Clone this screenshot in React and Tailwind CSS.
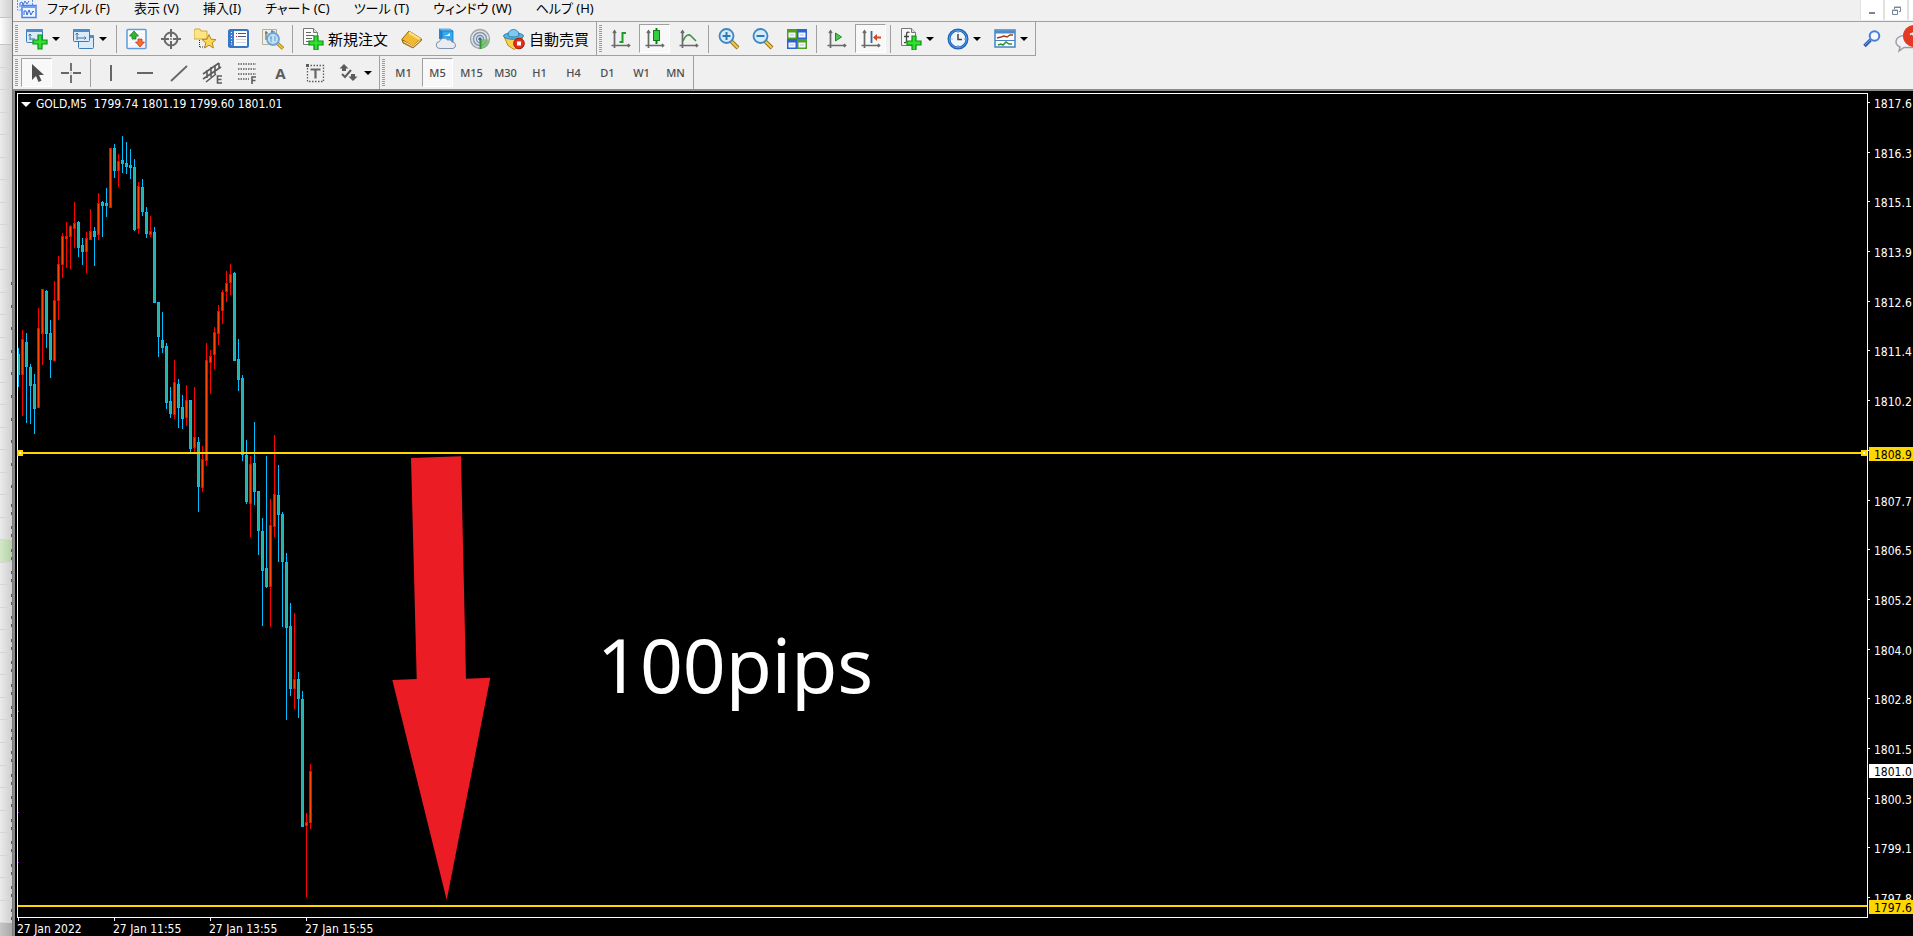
import React from "react";

/* ---------- data ---------- */

const MENUS = ["ファイル (F)", "表示 (V)", "挿入(I)", "チャート (C)", "ツール (T)", "ウィンドウ (W)", "ヘルプ (H)"];
const PERIODS = ["M1", "M5", "M15", "M30", "H1", "H4", "D1", "W1", "MN"];
const PRICES = [
  "1817.6", "1816.3", "1815.1", "1813.9", "1812.6", "1811.4", "1810.2", "1808.9", "1807.7",
  "1806.5", "1805.2", "1804.0", "1802.8", "1801.5", "1800.3", "1799.1", "1797.8",
];
const TIMES = ["27 Jan 2022", "27 Jan 11:55", "27 Jan 13:55", "27 Jan 15:55"];

// [rising, wick top, wick bottom, body top, body bottom], one bar every 4px
const CANDLES = [
  [0, 348, 387, 354, 375], [1, 330, 416, 339, 375], [0, 333, 423, 342, 367], [0, 364, 424, 367, 386],
  [0, 374, 434, 384, 409], [1, 308, 408, 328, 408], [1, 289, 365, 289, 334], [0, 290, 348, 291, 334],
  [0, 320, 378, 333, 360], [1, 281, 362, 300, 361], [1, 256, 320, 264, 301], [1, 233, 278, 236, 265],
  [1, 222, 268, 236, 239], [1, 225, 269, 226, 237], [1, 202, 248, 223, 229], [0, 221, 257, 222, 248],
  [0, 238, 265, 245, 252], [1, 232, 273, 238, 252], [1, 209, 240, 231, 240], [0, 227, 266, 231, 237],
  [1, 193, 240, 203, 235], [0, 201, 237, 202, 206], [0, 188, 217, 203, 206], [1, 148, 208, 148, 208],
  [0, 144, 178, 148, 171], [1, 154, 187, 161, 171], [0, 136, 173, 160, 164], [0, 142, 174, 163, 167],
  [0, 149, 179, 165, 168], [0, 159, 231, 167, 230], [1, 182, 234, 186, 229], [0, 179, 216, 187, 212],
  [0, 207, 238, 212, 234], [1, 216, 237, 231, 235], [0, 227, 303, 232, 303], [0, 302, 357, 302, 337],
  [0, 312, 353, 340, 348], [0, 343, 409, 346, 403], [0, 387, 418, 401, 414], [1, 360, 419, 382, 415],
  [0, 379, 428, 384, 408], [0, 395, 429, 407, 419], [1, 385, 426, 400, 418], [0, 400, 453, 400, 449],
  [1, 387, 453, 437, 448], [0, 437, 512, 442, 487], [1, 446, 492, 459, 488], [1, 343, 466, 360, 461],
  [1, 350, 394, 356, 363], [1, 327, 369, 332, 355], [1, 305, 345, 311, 334], [1, 290, 324, 292, 311],
  [1, 271, 302, 283, 292], [1, 264, 295, 274, 283], [0, 272, 361, 273, 361], [0, 339, 391, 359, 380],
  [0, 375, 461, 378, 455], [0, 440, 504, 455, 502], [1, 456, 537, 464, 504], [0, 422, 505, 463, 492],
  [0, 491, 555, 491, 531], [0, 518, 626, 531, 571], [0, 456, 588, 568, 587], [1, 499, 627, 525, 587],
  [1, 435, 537, 494, 527], [0, 465, 562, 495, 515], [0, 512, 627, 514, 562], [0, 553, 720, 562, 628],
  [0, 603, 696, 626, 689], [1, 613, 709, 679, 689], [0, 672, 718, 679, 699], [0, 691, 827, 699, 827],
  [1, 813, 897, 822, 826], [1, 764, 829, 771, 823],
];

/* ---------- icons ---------- */

function Ico({ children, w = 22, h = 22 }) {
  return (
    <svg width={w} height={h} viewBox={`0 0 ${w} ${h}`} fill="none" aria-hidden="true" className="shrink-0">
      {children}
    </svg>
  );
}

function Plus({ x, y }) {
  return (
    <path
      d={`M${x + 5} ${y}h4v5h5v4h-5v5h-4v-5h-5v-4h5z`}
      fill="#2fe02f"
      stroke="#0b8f16"
      strokeWidth="1.2"
    />
  );
}

function Win({ x, y, w, h }) {
  return (
    <g>
      <rect x={x + 0.5} y={y + 0.5} width={w} height={h} rx="1" fill="#d9eaf8" stroke="#3c7cb8" />
      <rect x={x} y={y} width={w + 1} height="3" rx="1" fill="#4a8ccc" />
    </g>
  );
}

const Logo = () => (
  <svg width="20" height="19" viewBox="0 0 20 19" fill="none" aria-hidden="true">
    <rect x=".5" y="-3" width="15" height="13" fill="#e8f1ff" stroke="#5c8fe8" strokeDasharray="2 1" />
    <path d="M3 7V3l2-1 1 3 2-4 2 3 2-3" stroke="#3f74dc" />
    <rect x="5" y="5.500" width="14" height="12" fill="#eef5ff" stroke="#4a82ea" strokeWidth="1.500" />
    <path d="M5 7h14" stroke="#6fa0f2" strokeWidth="2" />
    <path d="M7 15v-4l2 0 1 4 2-5 2 5 2-4 1 1" stroke="#3568d4" />
  </svg>
);

const NewChart = () => (
  <Ico>
    <Win x={0} y={1} w={16} h={13} />
    <path d="M4 6v6M2.500 7.500 4 6l1.500 1.500M4 11h5" stroke="#3d6f9f" />
    <Plus x={7} y={7} />
  </Ico>
);
const Profiles = () => (
  <Ico>
    <Win x={5} y={7} w={15} h={13} />
    <Win x={0} y={1} w={16} h={12} />
    <path d="M4 5v7M2.500 6.500 4 5l1.500 1.500M4 10h9M11.500 8.500 13 10l-1.500 1.500" stroke="#3d6f9f" />
  </Ico>
);
const Market = () => (
  <Ico>
    <rect x="1" y="1.500" width="19" height="19" rx="1" fill="#fff" stroke="#5b9bdc" strokeWidth="1.500" />
    <path d="M3 6h16M3 9h16M3 12h16M3 15h16M3 18h16" stroke="#e3eaf1" />
    <path d="M8 3l4.500 5h-2.500v3H6V8H3.500z" fill="#36b336" stroke="#168016" strokeWidth=".8" />
    <path d="M14 19l-4.500-5H12v-3h4v3h2.500z" fill="#f46a3a" stroke="#c93c12" strokeWidth=".8" />
  </Ico>
);
const Target = () => (
  <Ico>
    <circle cx="11" cy="11" r="6.500" stroke="#6a6a6a" strokeWidth="2" />
    <path d="M11 1v8M11 13v8M1 11h8M13 11h8" stroke="#6a6a6a" strokeWidth="2" />
    <path d="M11 10v2M10 11h2" stroke="#777" />
  </Ico>
);
const Favorites = () => (
  <Ico>
    <path d="M0 3l1-2h5l1 2h6v8H0z" fill="#fbe588" stroke="#d2a838" />
    <path d="M5.500 12v7M6 19h5" stroke="#333" strokeDasharray="1 1" />
    <path d="M15 6.500l2 4.700 5 .4-3.800 3.300 1.200 5.100-4.400-2.800-4.400 2.800 1.200-5.100L8 11.600l5-.4z" fill="#fbd657" stroke="#b98718" />
  </Ico>
);
const Navigator = () => (
  <Ico>
    <rect x="1" y="2" width="19" height="17" rx="1.500" fill="#fff" stroke="#3876c4" strokeWidth="2" />
    <path d="M2 3h4v15H2z" fill="#3b7fd0" />
    <path d="M3 4.500h1M3 7.500h1M3 10.500h1M3 13.500h1M3 16h1" stroke="#fff" />
    <path d="M8 5.500h1M8 8.500h1" stroke="#d22" />
    <path d="M10 5.500h8M10 8.500h8" stroke="#557" />
    <path d="M8 11.500h10M8 14.500h10" stroke="#ccd8e6" />
  </Ico>
);
const Tester = () => (
  <Ico>
    <path d="M.5 1.500h14v15H.5z" fill="#efefe6" stroke="#b0b09c" />
    <path d="M4 3v9M3 5h3M10 2v5M9 4h4M4 10h2" stroke="#555" />
    <path d="M15 15l6 5.500" stroke="#9a7414" strokeWidth="3.500" />
    <path d="M15 15l6 5.500" stroke="#f0c23c" strokeWidth="2" />
    <circle cx="11" cy="11" r="6" fill="#bfe0f6" stroke="#6ba6d6" strokeWidth="1.800" />
    <path d="M9 8v6M13 8v5M8 10h2" stroke="#6f9dc0" />
  </Ico>
);
const NewOrder = () => (
  <Ico>
    <path d="M1.500 .5h10l4 4v12h-14z" fill="#fbfbfb" stroke="#777" />
    <path d="M11.500 .5v4h4" stroke="#777" fill="#ddd" />
    <path d="M4 4.500h5M4 7.500h8M4 10.500h6M4 13.500h4" stroke="#666" />
    <Plus x={7} y={8} />
  </Ico>
);
const Book = () => (
  <Ico>
    <path d="M8 3l12 7.500-8 8L.8 11.500z" fill="#f1b92e" stroke="#96640c" />
    <path d="M8 3l12 7.500-2 1.500L8 6z" fill="#fbe08a" />
    <path d="M1 12l1 3 10 5 8.500-7.500V11L12 18.500z" fill="#c98a16" stroke="#8a5a0a" strokeWidth=".8" />
    <path d="M2.500 13.500l9.500 5 7.500-6.500" stroke="#fff3c8" />
  </Ico>
);
const Cloud = () => (
  <Ico>
    <path d="M4 1l3 1v10l-3-1z" fill="#1c86d8" />
    <path d="M4 1h11l3 2H7z" fill="#7fd0fb" stroke="#1c7fc8" strokeWidth=".6" />
    <path d="M7 3h11v11H7z" fill="#35a8ee" stroke="#1776bd" strokeWidth=".8" />
    <path d="M9 8l3-1 3-2v3z" fill="#e8f7ff" />
    <path d="M5 20.500a3.500 3.500 0 01-.5-7 4.500 4.500 0 018-1.500 3.500 3.500 0 014.500 2 3.300 3.300 0 011 6.500z" fill="#e8ecf3" stroke="#8391ab" />
  </Ico>
);
const Signal = () => (
  <Ico>
    <circle cx="11" cy="11" r="9.500" fill="#dde3ea" stroke="#9aa4ae" strokeWidth="1.300" />
    <circle cx="11" cy="11" r="6.500" stroke="#8a97a6" strokeWidth="1.500" />
    <circle cx="11" cy="11" r="3.500" stroke="#6f88a8" strokeWidth="1.300" fill="#eef3f8" />
    <path d="M11 11l9 .5a9.500 9.500 0 01-9 9.500z" fill="#6cbb62" opacity=".75" />
    <circle cx="11" cy="11" r="1.800" fill="#3d69a8" />
    <path d="M11.500 12v9" stroke="#2f9a34" strokeWidth="2" />
  </Ico>
);
const AutoTrade = () => (
  <Ico>
    <path d="M1.500 9.500h18l-2 7.500-6.500 4.500L5 17.500z" fill="#f7d24c" stroke="#b98b1c" />
    <ellipse cx="10.500" cy="8" rx="10" ry="3.300" fill="#5ab4e2" stroke="#2b7fae" />
    <path d="M5 7.500c0-8 11-8 11 0-2 2-9 2-11 0z" fill="#7ccaf0" stroke="#2b7fae" />
    <circle cx="16" cy="15.500" r="5.300" fill="#e0301e" stroke="#a81408" />
    <rect x="14" y="13.500" width="4" height="4" fill="#fff" />
  </Ico>
);

const Axes = () => (
  <path d="M4.500 3v17M1.500 17.500h18M3 5l1.500-2L6 5M18 16l1.500 1.500L18 19" stroke="#6a6a6a" strokeWidth="1.700" />
);
const BarChart = () => (
  <Ico>
    <Axes />
    <path d="M12.500 4v11M12.500 5h3.500M9.500 14h3" stroke="#1f9a2c" strokeWidth="2" />
  </Ico>
);
const CandleChart = () => (
  <Ico>
    <Axes />
    <path d="M12.500 0v16" stroke="#0c7d18" strokeWidth="2" />
    <rect x="9.500" y="2.500" width="6" height="10" fill="#33cc3e" stroke="#0c7d18" />
  </Ico>
);
const LineChart = () => (
  <Ico>
    <Axes />
    <path d="M5 13c3-7 6-7 8-5l5 5" stroke="#3f8f45" strokeWidth="1.600" />
  </Ico>
);
function Zoom({ plus }) {
  return (
    <Ico>
      <path d="M13 13l7 7" stroke="#94700f" strokeWidth="4" />
      <path d="M13 13l6.700 6.700" stroke="#f2cb4a" strokeWidth="2.200" />
      <circle cx="8.500" cy="8" r="7" fill="#d4ecfb" stroke="#3f87c2" strokeWidth="1.800" />
      <path d={plus ? "M4.500 8h8M8.500 4v8" : "M4.500 8h8"} stroke="#3279b4" strokeWidth="2" />
    </Ico>
  );
}
const Tile = () => (
  <Ico>
    <rect x="1" y="1" width="10" height="10" fill="#4f9f1c" />
    <rect x="11" y="1" width="10" height="10" fill="#2c62d2" />
    <rect x="1" y="11" width="10" height="10" fill="#2c62d2" />
    <rect x="11" y="11" width="10" height="10" fill="#4f9f1c" />
    <path d="M2.500 4.500h7v5h-7zM12.500 4.500h7v5h-7zM2.500 14.500h7v5h-7zM12.500 14.500h7v5h-7z" fill="#f4f8ff" />
    <path d="M4 7h4M14 7h4M4 17h4M14 17h4" stroke="#a9c3e4" />
  </Ico>
);
const AutoScroll = () => (
  <Ico>
    <Axes />
    <path d="M9.500 5v8l6-4z" fill="#4fc653" stroke="#168a22" />
  </Ico>
);
const Shift = () => (
  <Ico>
    <Axes />
    <path d="M11.500 3v12" stroke="#2a6c9c" strokeWidth="1.800" />
    <path d="M13 9.500l4-3.500v2.500h4v2h-4V13z" fill="#d9481c" />
  </Ico>
);
const Indicators = () => (
  <Ico>
    <path d="M1.500 .5h10l4 4v13h-14z" fill="#f8f8f8" stroke="#777" />
    <path d="M11.500 .5v4h4" stroke="#777" fill="#ddd" />
    <path d="M9.500 4.500c-2-1-3 0-3 2v6c0 2-1 2.500-2.500 2M4 8.500h5" stroke="#444" strokeWidth="1.300" />
    <Plus x={7} y={8} />
  </Ico>
);
const Clock = () => (
  <Ico>
    <circle cx="11" cy="11" r="9" fill="#eef5fb" stroke="#1e62b8" strokeWidth="3" />
    <circle cx="11" cy="11" r="8.800" stroke="#4f9be6" strokeWidth="1" />
    <path d="M11 6v5.500h4" stroke="#444" strokeWidth="1.500" />
    <path d="M11 4v1M11 17v1M4.500 11h1M17 11h1" stroke="#888" />
  </Ico>
);
const Template = () => (
  <Ico>
    <rect x="1" y="2" width="20" height="17" fill="#fff" stroke="#4384c4" strokeWidth="1.500" />
    <path d="M1 4h20" stroke="#4a8ccc" strokeWidth="3" />
    <path d="M1 12.500h20" stroke="#4384c4" />
    <path d="M3 10l4-1 3-1 3 1 3-2h3" stroke="#a83a20" strokeWidth="1.500" />
    <path d="M4 17l3-1 2 1 3-3 3 2 3 0" stroke="#2f8f34" strokeWidth="1.500" />
  </Ico>
);

const Cursor = () => (
  <Ico>
    <path d="M6 2v16l4-4 2.500 6 3-1.300L13 13h5z" fill="#4f4f4f" />
  </Ico>
);
const Cross = () => (
  <Ico>
    <path d="M11 1v8M11 13v8M1 11h8M13 11h8" stroke="#666" strokeWidth="1.800" />
    <path d="M10.500 11h1" stroke="#666" />
  </Ico>
);
const VLine = () => (
  <Ico>
    <path d="M11 3v16" stroke="#666" strokeWidth="2" />
  </Ico>
);
const HLine = () => (
  <Ico>
    <path d="M3 11h16" stroke="#666" strokeWidth="2" />
  </Ico>
);
const Trend = () => (
  <Ico>
    <path d="M3 19L19 4" stroke="#666" strokeWidth="1.800" />
  </Ico>
);
const Channel = () => (
  <Ico>
    <path d="M1 12L17 1M1 17L19 5M4 20L14 12M5 8v8M9 5v10M13 3v9M17 1v6" stroke="#5c5c5c" strokeWidth="1.600" />
    <path d="M20 14h-4.500v7H20M15.500 17.500h4" stroke="#5c5c5c" strokeWidth="1.600" />
  </Ico>
);
const Fibo = () => (
  <Ico>
    <path d="M2 2h18M2 7h18M2 12h18M2 17h11" stroke="#5c5c5c" strokeWidth="1.300" strokeDasharray="1.500 1" />
    <path d="M20 15h-4v7M16 18.500h3.500" stroke="#5c5c5c" strokeWidth="1.600" />
  </Ico>
);
const Label = () => (
  <Ico>
    <path d="M3.500 3.500h16v16h-16z" stroke="#5c5c5c" strokeDasharray="1.500 1.500" strokeWidth="1.300" />
    <path d="M2 2h3v3H2z" fill="#5c5c5c" />
    <path d="M6.500 7.500h10M11.500 7v9.500" stroke="#666" strokeWidth="2.200" />
  </Ico>
);
const Arrows = () => (
  <Ico>
    <path d="M6 2l4.500 4.500H8V9H4V6.500H1.500z" fill="#5c5c5c" />
    <path d="M4 12l3 3 6-7" stroke="#5c5c5c" strokeWidth="2" />
    <path d="M15 19l-4.500-4.500H13V12h4v2.500h2.500z" fill="#5c5c5c" />
  </Ico>
);

/* ---------- toolbar parts ---------- */

const Grip = () => (
  <span className="ml-0.5 h-[27px] w-[3px] shrink-0 bg-[repeating-linear-gradient(to_bottom,#9a9a9a_0,#9a9a9a_1px,#f0f0f0_1px,#f0f0f0_2px)]" />
);

const Sep = () => <span className="mx-px h-7 w-px shrink-0 bg-[#a0a0a0]" />;

function Tool({ name, icon, text, menu, active }) {
  return (
    <button
      type="button"
      aria-label={name}
      aria-pressed={active ? true : undefined}
      className={
        "flex h-[29px] shrink-0 items-center " +
        (active
          ? "border border-t-[#a0a0a0] border-r-white border-b-white border-l-[#a0a0a0] bg-[#f8f8f8] "
          : "") +
        (menu ? "w-11" : text ? "w-24" : "w-[31px] justify-center")
      }
    >
      {menu || text ? <span className="flex w-[31px] shrink-0 justify-center">{icon}</span> : icon}
      {menu && (
        <svg width="8" height="4" viewBox="0 0 8 4" aria-hidden="true" className="shrink-0">
          <path d="M0 0h8L4 4z" fill="#000" />
        </svg>
      )}
      {text && <span className="text-[15px] leading-5 whitespace-nowrap text-black">{text}</span>}
    </button>
  );
}

function Toolbar({ children, label }) {
  return (
    <div
      role="toolbar"
      aria-label={label}
      className="flex h-full shrink-0 items-center gap-[3px] border-r border-[#a0a0a0] pr-0.5"
    >
      {children}
    </div>
  );
}

/* ---------- window parts ---------- */

function MenuBar() {
  return (
    <div className="flex h-[22px] shrink-0 items-start justify-between border-b border-[#a0a0a0]">
      <nav className="flex items-start pl-1">
        <Logo />
        <ul className="flex gap-6 pl-2.5 text-[13px] leading-4 whitespace-nowrap text-black [font-feature-settings:'palt']">
          {MENUS.map((m) => (
            <li key={m}>
              <button type="button">{m}</button>
            </li>
          ))}
        </ul>
      </nav>
      <div className="flex h-5 gap-0.5 bg-[#e2e2e2] pl-px">
        <button type="button" aria-label="Minimize" className="flex w-[22px] items-center justify-center bg-white">
          <svg width="8" height="8" viewBox="0 0 8 8" aria-hidden="true">
            <path d="M1 6h6v2H1z" fill="#778899" />
          </svg>
        </button>
        <button type="button" aria-label="Restore" className="flex w-[22px] items-center justify-center bg-white">
          <svg width="9" height="9" viewBox="0 0 9 9" fill="none" stroke="#778899" aria-hidden="true">
            <path d="M2.500 3V1h6v4.500H7M2.500 1.500h6" />
            <path d="M.5 4h5v4.500h-5zM.5 4.500h5" />
          </svg>
        </button>
        <span className="w-1 bg-white" />
      </div>
    </div>
  );
}

function MainToolbar() {
  return (
    <div className="flex h-[34px] shrink-0 justify-between">
      <div className="flex border-b border-[#a0a0a0]">
        <Toolbar label="Standard">
          <Grip />
          <Tool name="New chart" icon={<NewChart />} menu />
          <Tool name="Profiles" icon={<Profiles />} menu />
          <Sep />
          <Tool name="Market watch" icon={<Market />} />
          <Tool name="Data window" icon={<Target />} />
          <Tool name="Favorites" icon={<Favorites />} />
          <Tool name="Navigator" icon={<Navigator />} />
          <Tool name="Strategy tester" icon={<Tester />} />
          <Sep />
          <Tool name="新規注文" icon={<NewOrder />} text="新規注文" />
          <Tool name="MetaEditor" icon={<Book />} />
          <Tool name="Hosting" icon={<Cloud />} />
          <Tool name="Signals" icon={<Signal />} />
          <Tool name="自動売買" icon={<AutoTrade />} text="自動売買" />
        </Toolbar>
        <Toolbar label="Charts">
          <Grip />
          <Tool name="Bar chart" icon={<BarChart />} />
          <Tool name="Candlesticks" icon={<CandleChart />} active />
          <Tool name="Line chart" icon={<LineChart />} />
          <Sep />
          <Tool name="Zoom in" icon={<Zoom plus />} />
          <Tool name="Zoom out" icon={<Zoom />} />
          <Tool name="Tile windows" icon={<Tile />} />
          <Sep />
          <Tool name="Auto scroll" icon={<AutoScroll />} />
          <Tool name="Chart shift" icon={<Shift />} active />
          <Sep />
          <Tool name="Indicators" icon={<Indicators />} menu />
          <Tool name="Periods" icon={<Clock />} menu />
          <Tool name="Templates" icon={<Template />} menu />
        </Toolbar>
      </div>
      <div className="flex items-center gap-3.5">
        <button type="button" aria-label="Search">
          <svg width="18" height="18" viewBox="0 0 18 18" fill="none" aria-hidden="true">
            <path d="M1.500 16l6-6" stroke="#2c5cb4" strokeWidth="3.600" />
            <path d="M2 15l5-5" stroke="#7ba4e8" />
            <circle cx="11.500" cy="6" r="4.800" fill="#f4f9ff" stroke="#4a7fd6" strokeWidth="2" />
          </svg>
        </button>
        <button type="button" aria-label="Messages">
          <svg width="18" height="28" viewBox="0 0 18 28" fill="none" aria-hidden="true">
            <path d="M18 12C8 8 1 12 1 17c0 3 2 4 4 5l-1 4 5-3.500h9z" fill="#f3f3f6" stroke="#9a9aa2" strokeWidth="1.400" />
            <circle cx="19" cy="11" r="11" fill="#e23a24" />
            <path d="M15 9.500l3-1.500v2.500" stroke="#fff" strokeWidth="1.500" />
          </svg>
        </button>
      </div>
    </div>
  );
}

function DrawToolbar() {
  return (
    <div className="flex h-[35px] shrink-0 border-b-2 border-[#8a8a8a]">
      <Toolbar label="Line studies">
        <Grip />
        <Tool name="Cursor" icon={<Cursor />} active />
        <Tool name="Crosshair" icon={<Cross />} />
        <Sep />
        <Tool name="Vertical line" icon={<VLine />} />
        <Tool name="Horizontal line" icon={<HLine />} />
        <Tool name="Trendline" icon={<Trend />} />
        <Tool name="Equidistant channel" icon={<Channel />} />
        <Tool name="Fibonacci" icon={<Fibo />} />
        <Tool name="Text" icon={<span className="text-[15px] leading-5 font-bold text-[#5c5c5c]">A</span>} />
        <Tool name="Text label" icon={<Label />} />
        <Tool name="Arrows" icon={<Arrows />} menu />
      </Toolbar>
      <Toolbar label="Periodicity">
        <Grip />
        {PERIODS.map((p) => (
          <Tool
            key={p}
            name={p}
            active={p === "M5"}
            icon={<span className="text-[11px] leading-4 font-medium text-[#4c4c4c]">{p}</span>}
          />
        ))}
      </Toolbar>
    </div>
  );
}

function Candle({ i, up, high, low, top, bottom }) {
  const x = i * 4;
  const line = up ? "#ff0000" : "#00bfff";
  const fill = up ? "#ff4500" : "#20b2aa";
  return (
    <g>
      <rect x={x} y={high} width="1" height={low - high} fill={line} />
      <rect x={x - 1} y={top} width="3" height={bottom - top} fill={line} />
      <rect x={x} y={top + 1} width="1" height={bottom - top - 2} fill={fill} />
    </g>
  );
}

const Handle = ({ side }) => (
  <span className={"absolute -top-0.5 flex size-1.5 items-center justify-center bg-[#ffd700] " + side}>
    <span className="size-0.5 bg-white" />
  </span>
);

function Plot() {
  return (
    <div className="relative min-w-0 border border-white">
      <svg width="100%" height="100%" className="absolute inset-0" shapeRendering="crispEdges" aria-hidden="true">
        <g transform="translate(0 -94)">
          {CANDLES.map(([up, high, low, top, bottom], i) => (
            <Candle key={i} i={i} up={up} high={high} low={low} top={top} bottom={bottom} />
          ))}
          {[711, 812, 862].map((y) => (
            <rect key={y} x="0" y={y} width="1" height="1" fill="#a020f0" />
          ))}
        </g>
      </svg>
      <div className="absolute top-[358px] right-0 left-0 h-0.5 bg-[#ffd700]">
        <Handle side="-left-px" />
        <Handle side="right-0" />
      </div>
      <div className="absolute top-[811px] right-0 left-0 h-0.5 bg-[#ffd700]" />
      <svg width="100" height="446" viewBox="0 0 100 446" className="absolute top-[361px] left-[374px]" aria-hidden="true">
        <path d="M19 3L69 1.300L74 223.700L98.300 222.700L54.700 445L.3 225L24.700 224z" fill="#ec1c24" />
      </svg>
      <p className="absolute top-[518px] left-[579px] font-['Noto_Sans',sans-serif] text-[75px] leading-[104px] text-white">
        100pips
      </p>
      <button type="button" className="absolute top-0.5 left-[3px] flex items-center gap-[5px] leading-4 text-white">
        <svg width="10" height="5" viewBox="0 0 10 5" aria-hidden="true">
          <path d="M0 0h10L5 5z" fill="#fff" />
        </svg>
        <span className="whitespace-pre">GOLD,M5  1799.74 1801.19 1799.60 1801.01</span>
      </button>
    </div>
  );
}

function PriceTag({ children, place }) {
  return <span className={"absolute right-0 left-px h-3.5 pl-[5px] leading-4 text-black " + place}>{children}</span>;
}

function PriceAxis() {
  return (
    <div className="relative overflow-hidden leading-4 text-white">
      <ol className="flex h-full flex-col justify-between pt-[3px] pb-[13px]">
        {PRICES.map((p) => (
          <li key={p} className="flex h-3.5 gap-1">
            <span className="mt-1.5 h-px w-0.5 shrink-0 bg-white" />
            {p}
          </li>
        ))}
      </ol>
      <PriceTag place="top-[354px] bg-[#ffd700]">1808.9</PriceTag>
      <PriceTag place="top-[671px] bg-white">1801.0</PriceTag>
      <PriceTag place="top-[807px] bg-[#ffd700]">1797.6</PriceTag>
    </div>
  );
}

function TimeAxis() {
  return (
    <ol className="flex leading-4 whitespace-nowrap text-white">
      {TIMES.map((t) => (
        <li key={t} className="w-24 shrink-0">
          <span className="ml-px block h-[3px] w-px bg-white" />
          {t}
        </li>
      ))}
    </ol>
  );
}

function BackgroundSheet() {
  return (
    <div className="flex w-3 shrink-0 flex-col bg-linear-to-r from-[#ebebeb] to-[#cfcfcf]">
      <div className="h-[18px] shrink-0 border-b border-[#c4c4c4]" />
      <div className="h-[27px] shrink-0 border-b border-[#c4c4c4] bg-linear-to-r from-white to-[#d8d8d8]" />
      {Array.from({ length: 39 }, (_, i) => (
        <div
          key={i}
          className={
            "flex min-h-0 flex-1 flex-col items-end justify-center gap-[5px] border-b border-[#d6d6d6] pt-1.5 " +
            (i === 22 ? "bg-linear-to-r from-[#d3e8c8] to-[#b5cfa8]" : "")
          }
        >
          {i >= 10 && <span className="h-[3px] w-px bg-[#5a5a5a]" />}
          {i >= 20 && <span className="h-[3px] w-px bg-[#5a5a5a]" />}
        </div>
      ))}
      <div className="h-[13px] shrink-0 bg-linear-to-r from-[#c6c6c6] to-[#a8a8a8]" />
    </div>
  );
}

export default function App() {
  return (
    <div className="flex h-screen overflow-hidden bg-[#f0f0f0] font-['Noto_Sans','Noto_Sans_CJK_JP',sans-serif]">
      <BackgroundSheet />
      <div className="flex min-w-0 flex-1 flex-col border-l border-[#7a7a7a]">
        <MenuBar />
        <MainToolbar />
        <DrawToolbar />
        <main className="grid min-h-0 flex-1 grid-cols-[minmax(0,1fr)_45px] grid-rows-[minmax(0,1fr)_18px] border-l-2 border-[#8a8a8a] bg-black pt-0.5 pl-0.5 font-['DejaVu_Sans_Condensed','Noto_Sans',sans-serif] text-xs">
          <Plot />
          <PriceAxis />
          <TimeAxis />
        </main>
      </div>
    </div>
  );
}
